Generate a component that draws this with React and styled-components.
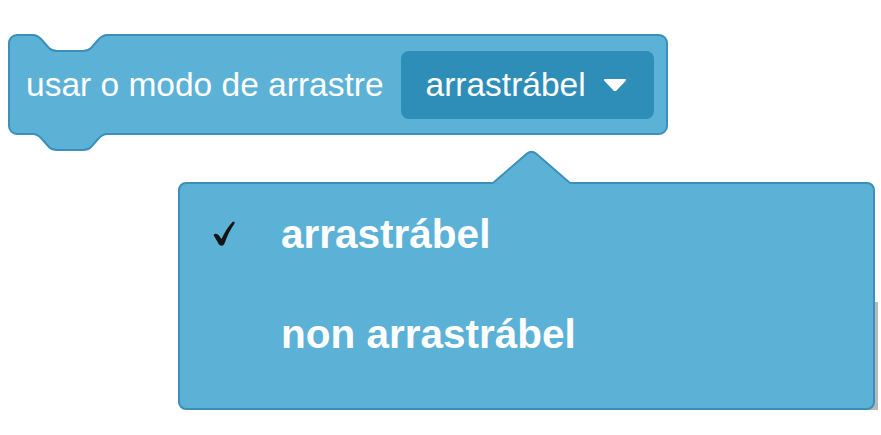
import styled, { createGlobalStyle } from "styled-components";

const GlobalStyle = createGlobalStyle`
  body {
    margin: 0;
    background: #fff;
    font-family: "Liberation Sans", Arial, sans-serif;
  }
`;

const Page = styled.div`
  display: flex;
  flex-direction: column;
  align-items: flex-start;
  padding: 34px 0 0 8px;
`;

const Block = styled.div`
  position: relative;
  box-sizing: border-box;
  width: 660px;
  height: 101px;
  display: flex;
  align-items: center;
  gap: 17px;
  padding: 0 15px 0 18px;
`;

const BlockShape = styled.svg`
  position: absolute;
  left: 0;
  top: 0;
  z-index: 0;
  overflow: visible;
`;

const Label = styled.span`
  position: relative;
  z-index: 1;
  color: #fff;
  font-size: 33.5px;
  white-space: nowrap;
`;

const Field = styled.div`
  position: relative;
  z-index: 1;
  box-sizing: border-box;
  height: 68px;
  flex: 1;
  display: flex;
  align-items: center;
  gap: 17px;
  padding: 0 27px 0 25px;
  border-radius: 8px;
  background: #2e8eb8;
  color: #fff;
  font-size: 33.5px;
`;

const Menu = styled.div`
  position: relative;
  box-sizing: border-box;
  width: 697px;
  height: 228px;
  margin: 47px 0 0 170px;
  padding: 0 0 24px 33px;
  border: 2px solid #3b8fba;
  border-radius: 8px;
  background: #5cb1d6;

  &::after {
    content: "";
    position: absolute;
    right: -5px;
    bottom: -10px;
    width: 18px;
    height: 116px;
    border-radius: 0 0 6px 0;
    background: rgba(0, 0, 0, 0.28);
    z-index: -1;
  }
`;

const Pointer = styled.svg`
  position: absolute;
  left: 313px;
  top: -34px;
`;

const Item = styled.div`
  display: flex;
  align-items: center;
  height: 100px;
  line-height: 100px;
  color: #fff;
  font-size: 40.5px;
  font-weight: 700;
  white-space: nowrap;
`;

const Check = styled.span`
  display: flex;
  align-items: center;
  width: 68px;
  height: 100%;
  visibility: ${({ $on }) => ($on ? "visible" : "hidden")};
`;

const options = ["arrastrábel", "non arrastrábel"];

export default function App() {
  const selected = "arrastrábel";
  return (
    <Page>
      <GlobalStyle />
      <Block>
        <BlockShape width="660" height="120" viewBox="0 0 660 120">
          <path
            d="M1 9 A8 8 0 0 1 9 1 H25 c4 0 6 2 8 4 l8 9 c2 2 4 3 8 3 h26 c4 0 6 -1 8 -3 l8 -9 c2 -2 4 -4 8 -4 H651 A8 8 0 0 1 659 9 V92 A8 8 0 0 1 651 100 H99 c-4 0 -6 2 -8 4 l-8 9 c-2 2 -4 3 -8 3 h-26 c-4 0 -6 -1 -8 -3 l-8 -9 c-2 -2 -4 -4 -8 -4 H9 A8 8 0 0 1 1 92 Z"
            fill="#5cb1d6"
            stroke="#3b8fba"
            strokeWidth="2"
          />
        </BlockShape>
        <Label>usar o modo de arrastre</Label>
        <Field>
          {selected}
          <svg width="24" height="14" viewBox="0 0 24 14">
            <path d="M2 1 H22 Q24 1 22.5 3 L13.5 12.5 Q12 14 10.5 12.5 L1.5 3 Q0 1 2 1 Z" fill="#fff" />
          </svg>
        </Field>
      </Block>
      <Menu>
        <Pointer width="77" height="37" viewBox="0 0 77 37">
          <path d="M0 33 L34 3.5 Q38.5 0 43 3.5 L77 33 V37 H0 Z" fill="#5cb1d6" />
          <path d="M0 33 L34 3.5 Q38.5 0 43 3.5 L77 33" fill="none" stroke="#3b8fba" strokeWidth="2" />
        </Pointer>
        {options.map((opt) => (
          <Item key={opt}>
            <Check $on={opt === selected}>
              <svg width="22" height="26" viewBox="0 0 22 26">
                <path
                  d="M0.5 14 Q3 11.5 6 14.5 L8.5 18 Q13 8 19.5 1 Q22 -0.5 21.5 2.5 Q15.5 11 11.5 22.5 Q9.5 26.5 6 23.5 Z"
                  fill="#141414"
                />
              </svg>
            </Check>
            {opt}
          </Item>
        ))}
      </Menu>
    </Page>
  );
}
